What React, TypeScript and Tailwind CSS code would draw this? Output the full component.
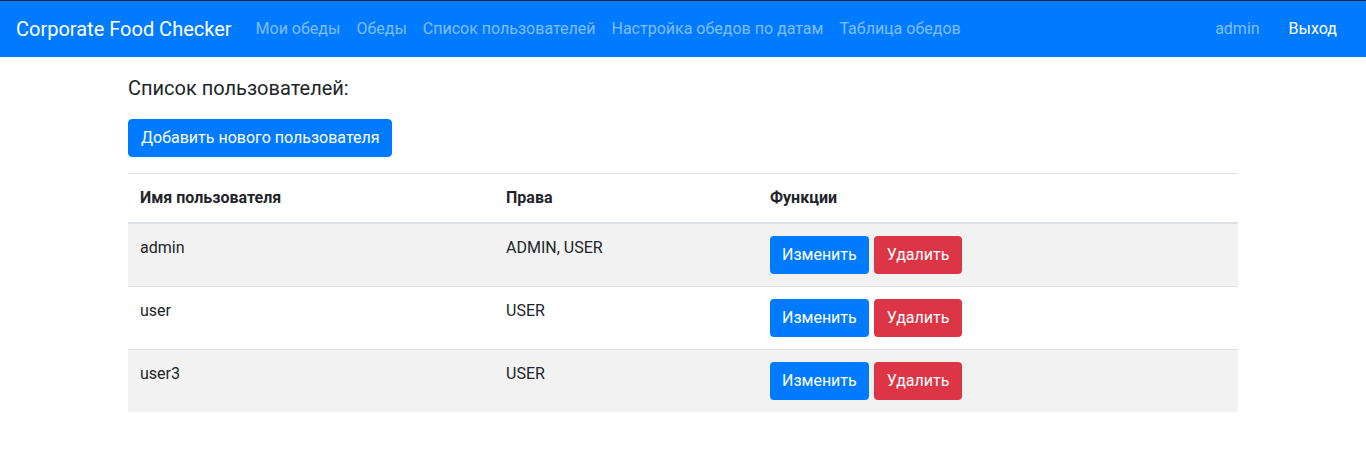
import React from "react";

const users = [
  { name: "admin", roles: "ADMIN, USER" },
  { name: "user", roles: "USER" },
  { name: "user3", roles: "USER" },
];

const links = ["Мои обеды", "Обеды", "Список пользователей", "Настройка обедов по датам", "Таблица обедов"];

export default function App() {
  return (
    <div className="min-h-[457px] bg-white text-[#212529] font-['Roboto','Liberation_Sans',sans-serif] text-base">
      <nav className="flex items-center h-[57px] border-t border-[#142441] bg-[#007bff] pl-4 pr-[21px]">
        <span className="text-[20px] leading-[30px] text-white mr-4">Corporate Food Checker</span>
        <ul className="flex">
          {links.map((l) => (
            <li key={l} className="px-2 leading-6 text-white/50">
              {l}
            </li>
          ))}
        </ul>
        <ul className="flex ml-auto">
          <li className="px-2 leading-6 text-white/50">admin</li>
          <li className="px-2 ml-[13px] leading-6 text-white">Выход</li>
        </ul>
      </nav>

      <div className="w-[1110px] mx-auto pt-[19px]">
        <h5 className="text-[20px] leading-6 font-normal mb-[19px]">Список пользователей:</h5>
        <button className="bg-[#007bff] text-white rounded px-3 py-[6px] leading-6 border border-[#007bff]">
          Добавить нового пользователя
        </button>

        <table className="w-full mt-4 border-collapse text-left">
          <thead>
            <tr>
              <th className="w-[366px] p-3 leading-6 font-bold border-t border-b-2 border-[#dee2e6]">Имя пользователя</th>
              <th className="w-[264px] p-3 leading-6 font-bold border-t border-b-2 border-[#dee2e6]">Права</th>
              <th className="p-3 leading-6 font-bold border-t border-b-2 border-[#dee2e6]">Функции</th>
            </tr>
          </thead>
          <tbody>
            {users.map((u, i) => (
              <tr key={u.name} className={i % 2 === 0 ? "bg-[#f2f2f2]" : ""}>
                <td className="p-3 align-top leading-6 border-t border-[#dee2e6]">{u.name}</td>
                <td className="p-3 align-top leading-6 border-t border-[#dee2e6]">{u.roles}</td>
                <td className="p-3 align-top leading-6 border-t border-[#dee2e6]">
                  <div className="flex gap-[5px]">
                    <button className="bg-[#007bff] text-white rounded px-3 py-[7px] leading-6">Изменить</button>
                    <button className="bg-[#dc3545] text-white rounded px-[13px] py-[7px] leading-6">Удалить</button>
                  </div>
                </td>
              </tr>
            ))}
          </tbody>
        </table>
      </div>
    </div>
  );
}
